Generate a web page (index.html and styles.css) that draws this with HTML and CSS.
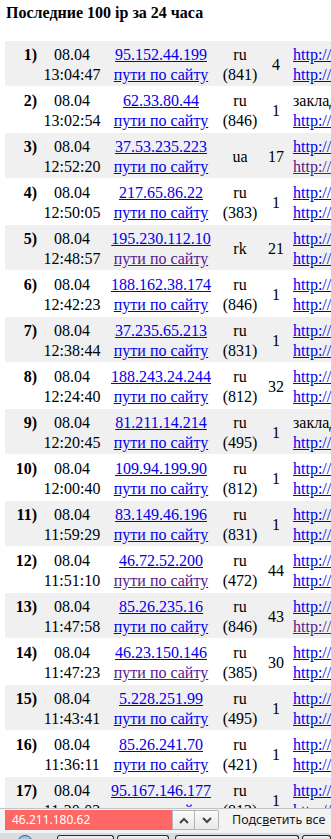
FILE: index.html
```html
<!DOCTYPE html>
<html>
<head>
<meta charset="utf-8">
<title>Последние 100 ip</title>
<link rel="stylesheet" href="styles.css">
</head>
<body>
<div class="title">Последние 100 ip за 24 часа</div>
<table class="log">
<tr class="odd"><td class="num">1)</td><td class="when">08.04<br>13:04:47</td><td class="ip"><a href="#">95.152.44.199</a><br><a href="#">пути по сайту</a></td><td class="geo">ru<br>(841)</td><td class="hits">4</td><td class="ref"><a href="#">http://www.yandex.ru/</a><br><a href="#">http://www.site.ru/</a></td></tr>
<tr><td class="num">2)</td><td class="when">08.04<br>13:02:54</td><td class="ip"><a href="#">62.33.80.44</a><br><a href="#">пути по сайту</a></td><td class="geo">ru<br>(846)</td><td class="hits">1</td><td class="ref">закладки<br><a href="#">http://www.site.ru/</a></td></tr>
<tr class="odd"><td class="num">3)</td><td class="when">08.04<br>12:52:20</td><td class="ip"><a href="#">37.53.235.223</a><br><a href="#">пути по сайту</a></td><td class="geo">ua</td><td class="hits">17</td><td class="ref"><a href="#">http://www.google.com/</a><br><a href="#" class="seen">http://www.site.ru/</a></td></tr>
<tr><td class="num">4)</td><td class="when">08.04<br>12:50:05</td><td class="ip"><a href="#">217.65.86.22</a><br><a href="#">пути по сайту</a></td><td class="geo">ru<br>(383)</td><td class="hits">1</td><td class="ref"><a href="#">http://www.yandex.ru/</a><br><a href="#">http://www.site.ru/</a></td></tr>
<tr class="odd"><td class="num">5)</td><td class="when">08.04<br>12:48:57</td><td class="ip"><a href="#">195.230.112.10</a><br><a href="#" class="seen">пути по сайту</a></td><td class="geo">rk</td><td class="hits">21</td><td class="ref"><a href="#">http://www.google.kz/</a><br><a href="#">http://www.site.ru/</a></td></tr>
<tr><td class="num">6)</td><td class="when">08.04<br>12:42:23</td><td class="ip"><a href="#">188.162.38.174</a><br><a href="#">пути по сайту</a></td><td class="geo">ru<br>(846)</td><td class="hits">1</td><td class="ref"><a href="#">http://www.yandex.ru/</a><br><a href="#">http://www.site.ru/</a></td></tr>
<tr class="odd"><td class="num">7)</td><td class="when">08.04<br>12:38:44</td><td class="ip"><a href="#">37.235.65.213</a><br><a href="#">пути по сайту</a></td><td class="geo">ru<br>(831)</td><td class="hits">1</td><td class="ref"><a href="#">http://www.yandex.ru/</a><br><a href="#">http://www.site.ru/</a></td></tr>
<tr><td class="num">8)</td><td class="when">08.04<br>12:24:40</td><td class="ip"><a href="#">188.243.24.244</a><br><a href="#">пути по сайту</a></td><td class="geo">ru<br>(812)</td><td class="hits">32</td><td class="ref"><a href="#">http://www.google.ru/</a><br><a href="#">http://www.site.ru/</a></td></tr>
<tr class="odd"><td class="num">9)</td><td class="when">08.04<br>12:20:45</td><td class="ip"><a href="#">81.211.14.214</a><br><a href="#">пути по сайту</a></td><td class="geo">ru<br>(495)</td><td class="hits">1</td><td class="ref">закладки<br><a href="#">http://www.site.ru/</a></td></tr>
<tr><td class="num">10)</td><td class="when">08.04<br>12:00:40</td><td class="ip"><a href="#">109.94.199.90</a><br><a href="#">пути по сайту</a></td><td class="geo">ru<br>(812)</td><td class="hits">1</td><td class="ref"><a href="#">http://www.yandex.ru/</a><br><a href="#">http://www.site.ru/</a></td></tr>
<tr class="odd"><td class="num">11)</td><td class="when">08.04<br>11:59:29</td><td class="ip"><a href="#">83.149.46.196</a><br><a href="#">пути по сайту</a></td><td class="geo">ru<br>(831)</td><td class="hits">1</td><td class="ref"><a href="#">http://www.yandex.ru/</a><br><a href="#">http://www.site.ru/</a></td></tr>
<tr><td class="num">12)</td><td class="when">08.04<br>11:51:10</td><td class="ip"><a href="#">46.72.52.200</a><br><a href="#" class="seen">пути по сайту</a></td><td class="geo">ru<br>(472)</td><td class="hits">44</td><td class="ref"><a href="#">http://www.google.ru/</a><br><a href="#">http://www.site.ru/</a></td></tr>
<tr class="odd"><td class="num">13)</td><td class="when">08.04<br>11:47:58</td><td class="ip"><a href="#">85.26.235.16</a><br><a href="#">пути по сайту</a></td><td class="geo">ru<br>(846)</td><td class="hits">43</td><td class="ref"><a href="#">http://www.yandex.ru/</a><br><a href="#" class="seen">http://www.site.ru/</a></td></tr>
<tr><td class="num">14)</td><td class="when">08.04<br>11:47:23</td><td class="ip"><a href="#">46.23.150.146</a><br><a href="#" class="seen">пути по сайту</a></td><td class="geo">ru<br>(385)</td><td class="hits">30</td><td class="ref"><a href="#">http://www.yandex.ru/</a><br><a href="#">http://www.site.ru/</a></td></tr>
<tr class="odd"><td class="num">15)</td><td class="when">08.04<br>11:43:41</td><td class="ip"><a href="#">5.228.251.99</a><br><a href="#">пути по сайту</a></td><td class="geo">ru<br>(495)</td><td class="hits">1</td><td class="ref"><a href="#">http://www.yandex.ru/</a><br><a href="#">http://www.site.ru/</a></td></tr>
<tr><td class="num">16)</td><td class="when">08.04<br>11:36:11</td><td class="ip"><a href="#">85.26.241.70</a><br><a href="#">пути по сайту</a></td><td class="geo">ru<br>(421)</td><td class="hits">1</td><td class="ref"><a href="#">http://www.yandex.ru/</a><br><a href="#">http://www.site.ru/</a></td></tr>
<tr class="odd"><td class="num">17)</td><td class="when">08.04<br>11:30:02</td><td class="ip"><a href="#">95.167.146.177</a><br><a href="#">пути по сайту</a></td><td class="geo">ru<br>(812)</td><td class="hits">1</td><td class="ref"><a href="#">http://www.yandex.ru/</a><br><a href="#">http://www.site.ru/</a></td></tr>
<tr><td class="num">18)</td><td class="when">08.04<br>11:28:40</td><td class="ip"><a href="#">37.110.22.81</a><br><a href="#">пути по сайту</a></td><td class="geo">ru<br>(495)</td><td class="hits">1</td><td class="ref"><a href="#">http://www.yandex.ru/</a><br><a href="#">http://www.site.ru/</a></td></tr>
</table>

<div class="findbar">
  <div class="find-field">46.211.180.62</div>
  <div class="find-btn find-prev"><svg width="10" height="7" viewBox="0 0 10 7"><path d="M1 6 L5 2 L9 6" fill="none" stroke="#444" stroke-width="2"/></svg></div>
  <div class="find-btn find-next"><svg width="10" height="7" viewBox="0 0 10 7"><path d="M1 1 L5 5 L9 1" fill="none" stroke="#444" stroke-width="2"/></svg></div>
  <div class="find-label">Подс<u>в</u>етить все</div>
</div>
<div class="taskbar">
  <div class="task task-start"><span class="orb"></span></div>
  <div class="task task-a"></div>
  <div class="task task-b"></div>
  <div class="task task-c"></div>
  <div class="task task-d"></div>
</div>
</body>
</html>
```

FILE: styles.css
```css
html {
  overflow: hidden;
}
body {
  margin: 0;
  padding: 0 5px;
  background: #fff;
  color: #000;
  font-family: "Liberation Serif", "Times New Roman", serif;
  font-size: 16px;
}
.title {
  font-weight: bold;
  font-size: 16px;
  line-height: 18px;
  padding: 4px 0 0 1px;
}
.log {
  margin-top: 18px;
  border-collapse: separate;
  border-spacing: 0 1px;
  table-layout: fixed;
  width: 640px;
}
.log td {
  box-sizing: border-box;
  padding: 4px 3px 1px;
  line-height: 20px;
  vertical-align: middle;
  white-space: nowrap;
  overflow: hidden;
}
.log tr.odd td {
  background: #f0f0f0;
}
.log a {
  color: #0000ee;
  text-decoration: underline;
}
.log a.seen {
  color: #551a8b;
}
.log td.num {
  width: 35px;
  text-align: right;
  font-weight: bold;
  vertical-align: top;
}
.when {
  width: 64px;
  text-align: center;
}
.ip {
  width: 114px;
  text-align: center;
}
.geo {
  width: 44px;
  text-align: center;
}
.hits {
  width: 28px;
  text-align: center;
}
.ref {
  text-align: left;
}

.findbar {
  position: fixed;
  left: 0;
  right: 0;
  bottom: 6px;
  height: 25px;
  box-sizing: border-box;
  border-top: 1px solid #c4c4c4;
  background: #f3f3f3;
  display: flex;
  align-items: flex-start;
  padding: 1px 0 0 5px;
  font-family: "Noto Sans", "Open Sans", sans-serif;
  font-size: 12px;
}
.find-field {
  width: 167px;
  height: 20px;
  box-sizing: border-box;
  background: #ff6666;
  color: #fff;
  line-height: 20px;
  padding-left: 7px;
}
.find-btn {
  width: 23px;
  height: 20px;
  box-sizing: border-box;
  border: 1px solid #b5b5b5;
  background: linear-gradient(#fbfbfb, #e9e9e9);
  display: flex;
  align-items: center;
  justify-content: center;
}
.find-next {
  border-left: none;
  width: 24px;
  border-radius: 0 2px 2px 0;
}
.find-label {
  margin-left: 13px;
  line-height: 20px;
  color: #1a1a1a;
  font-size: 12.5px;
}
.find-label u {
  text-decoration: underline;
}

.taskbar {
  position: fixed;
  left: 0;
  right: 0;
  bottom: 0;
  height: 6px;
  overflow: hidden;
  background: #d8dde4;
  display: flex;
  gap: 3px;
  padding-top: 2px;
  box-sizing: border-box;
}
.task {
  height: 6px;
  box-sizing: border-box;
  border: 1px solid #2b2b2b;
  border-bottom: none;
  border-radius: 3px 3px 0 0;
  background: linear-gradient(#f4f4f4, #c9ced6);
}
.task-start {
  width: 55px;
  border: none;
  background: transparent;
  position: relative;
}
.orb {
  position: absolute;
  left: 17px;
  top: 0;
  width: 14px;
  height: 14px;
  border-radius: 50%;
  border: 1px solid #3b5b7e;
  background: #9fc3e4;
}
.task-a { width: 58px; }
.task-b { width: 54px; }
.task-c { width: 126px; margin-left: 3px; }
.task-d { width: 30px; }
```
